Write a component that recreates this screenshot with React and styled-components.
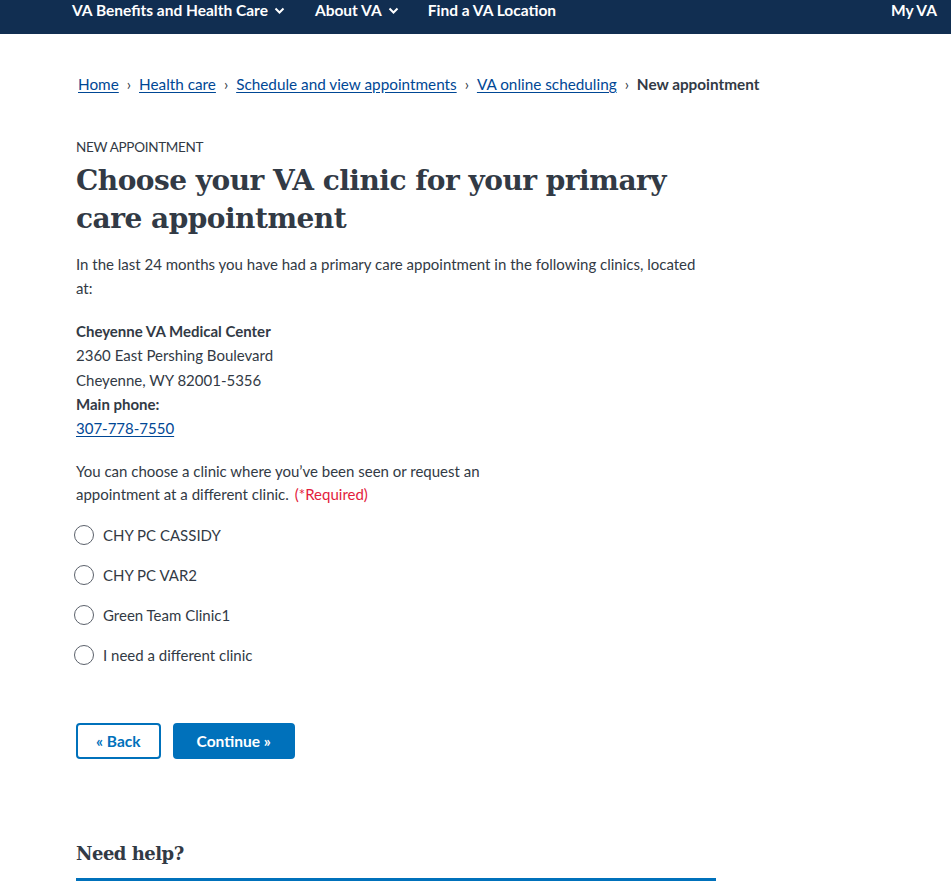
import React from "react";
import styled, { createGlobalStyle } from "styled-components";

const Global = createGlobalStyle`
  * { box-sizing: border-box; }
  body { margin: 0; background: #fff; color: #323a45; font-family: Lato, "Noto Sans", sans-serif; font-size: 15px; }
`;

const NavBar = styled.nav`
  height: 34px;
  background: #112e51;
  display: flex;
  align-items: flex-start;
  padding: 0 14px 0 72px;
`;

const NavItem = styled.a`
  color: #fff;
  font-weight: 700;
  font-size: 15.5px;
  line-height: 21px;
  margin-right: ${(p) => p.$gap || 0}px;
  display: flex;
  align-items: center;
  gap: 6px;
  text-decoration: none;
  margin-left: ${(p) => (p.$right ? "auto" : "0")};
`;

const Main = styled.main`
  padding: 38px 0 0 76px;
`;

const Crumbs = styled.ol`
  list-style: none;
  margin: 0 0 42px;
  padding: 0;
  display: flex;
  align-items: center;
  font-size: 15.3px;
  line-height: 24px;
`;

const Crumb = styled.li`
  display: flex;
  align-items: center;
  & + &::before {
    content: "›";
    color: #323a45;
    margin: 0 8px;
    font-size: 15px;
  }
`;

const Link = styled.a`
  color: #004795;
  text-decoration: underline;
  text-underline-offset: 2px;
  margin-left: ${(p) => (p.$first ? "2px" : "0")};
`;

const Current = styled.span`
  font-weight: 700;
`;

const Column = styled.div`
  width: 640px;
`;

const Eyebrow = styled.div`
  font-size: 13.5px;
  line-height: 18px;
  text-transform: uppercase;
  letter-spacing: -0.3px;
`;

const Title = styled.h1`
  font-family: "DejaVu Serif", serif;
  font-weight: 700;
  font-size: 28px;
  line-height: 38px;
  margin: 6px 0 14px;
  letter-spacing: -0.5px;
`;

const Para = styled.p`
  margin: 0 0 19px;
  max-width: 628px;
  line-height: 24px;
`;

const Address = styled.div`
  line-height: 24.3px;
  margin-bottom: 20px;
`;

const Strong = styled.div`
  font-weight: 700;
`;

const Fieldset = styled.fieldset`
  border: 0;
  margin: 0;
  padding: 0;
`;

const Legend = styled.legend`
  padding: 0;
  max-width: 420px;
  line-height: 23px;
`;

const Required = styled.span`
  color: #e31c3d;
  margin-left: 6px;
`;

const Options = styled.div`
  display: flex;
  flex-direction: column;
  gap: 20px;
  margin-top: 19px;
`;

const Option = styled.label`
  display: flex;
  align-items: center;
  gap: 9px;
  margin-left: -2px;
  height: 20px;
  line-height: 20px;
`;

const Circle = styled.span`
  width: 20px;
  height: 20px;
  border-radius: 50%;
  border: 1px solid #5b616b;
  background: #fff;
  flex: none;
`;

const Buttons = styled.div`
  display: flex;
  gap: 12px;
  margin-top: 58px;
`;

const Button = styled.button`
  height: 36px;
  border-radius: 4px;
  font-family: Lato, "Noto Sans", sans-serif;
  font-weight: 700;
  font-size: 15.5px;
  padding: 0 ${(p) => (p.$primary ? 22 : 18)}px;
  border: 2px solid #0071bb;
  background: ${(p) => (p.$primary ? "#0071bb" : "#fff")};
  color: ${(p) => (p.$primary ? "#fff" : "#0071bb")};
`;

const Help = styled.h2`
  font-family: "DejaVu Serif", serif;
  font-weight: 700;
  font-size: 18px;
  line-height: 26px;
  margin: 82px 0 0;
  padding-bottom: 11px;
  border-bottom: 3px solid #0071bb;
  letter-spacing: -0.5px;
`;

const Chevron = () => (
  <svg width="11" height="8" viewBox="0 0 11 8" fill="none" stroke="#fff" strokeWidth="2">
    <path d="M1.5 1.5 L5.5 5.5 L9.5 1.5" />
  </svg>
);

const clinics = ["CHY PC CASSIDY", "CHY PC VAR2", "Green Team Clinic1", "I need a different clinic"];

export default function App() {
  return (
    <>
      <Global />
      <NavBar>
        <NavItem $gap={30}>VA Benefits and Health Care <Chevron /></NavItem>
        <NavItem $gap={29}>About VA <Chevron /></NavItem>
        <NavItem>Find a VA Location</NavItem>
        <NavItem $right>My VA</NavItem>
      </NavBar>
      <Main>
        <Crumbs>
          <Crumb><Link $first href="#">Home</Link></Crumb>
          <Crumb><Link href="#">Health care</Link></Crumb>
          <Crumb><Link href="#">Schedule and view appointments</Link></Crumb>
          <Crumb><Link href="#">VA online scheduling</Link></Crumb>
          <Crumb><Current>New appointment</Current></Crumb>
        </Crumbs>
        <Column>
          <Eyebrow>New appointment</Eyebrow>
          <Title>Choose your VA clinic for your primary care appointment</Title>
          <Para>
            In the last 24 months you have had a primary care appointment in the following clinics, located at:
          </Para>
          <Address>
            <Strong>Cheyenne VA Medical Center</Strong>
            <div>2360 East Pershing Boulevard</div>
            <div>Cheyenne, WY 82001-5356</div>
            <Strong>Main phone:</Strong>
            <Link href="#">307-778-7550</Link>
          </Address>
          <Fieldset>
            <Legend>
              You can choose a clinic where you’ve been seen or request an appointment at a different clinic.
              <Required>(*Required)</Required>
            </Legend>
            <Options>
              {clinics.map((c) => (
                <Option key={c}>
                  <Circle />
                  {c}
                </Option>
              ))}
            </Options>
          </Fieldset>
          <Buttons>
            <Button>« Back</Button>
            <Button $primary>Continue »</Button>
          </Buttons>
          <Help>Need help?</Help>
        </Column>
      </Main>
    </>
  );
}
